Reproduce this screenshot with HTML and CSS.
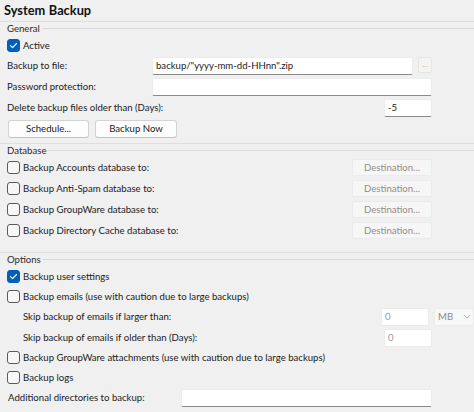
FILE: index.html
```html
<!DOCTYPE html>
<html>
<head>
<meta charset="utf-8">
<link rel="stylesheet" href="styles.css">
</head>
<body>
<div class="page">
  <div class="title">System Backup</div>

  <section class="group group-general">
    <div class="legend"><span>General</span><i></i></div>
    <div class="row">
      <label class="check"><span class="box on"><svg viewBox="0 0 12 12"><path d="M2.8 6.2 L5 8.3 L9.3 3.8" fill="none" stroke="#fff" stroke-width="1.3" stroke-linecap="round" stroke-linejoin="round"/></svg></span>Active</label>
    </div>
    <div class="row form r21">
      <span class="lbl">Backup to file:</span>
      <span class="input file">backup/"yyyy-mm-dd-HHnn".zip</span>
      <span class="browse">...</span>
    </div>
    <div class="row form r21">
      <span class="lbl">Password protection:</span>
      <span class="input wide"></span>
    </div>
    <div class="row form r21">
      <span class="lbl grow">Delete backup files older than (Days):</span>
      <span class="input small">-5</span>
    </div>
    <div class="row buttons r21">
      <span class="btn b1">Schedule...</span>
      <span class="btn b2">Backup Now</span>
    </div>
  </section>

  <section class="group group-db">
    <div class="legend"><span>Database</span><i></i></div>
    <div class="row r21">
      <label class="check grow"><span class="box"></span>Backup Accounts database to:</label>
      <span class="dest">Destination...</span>
    </div>
    <div class="row r21">
      <label class="check grow"><span class="box"></span>Backup Anti-Spam database to:</label>
      <span class="dest">Destination...</span>
    </div>
    <div class="row r21">
      <label class="check grow"><span class="box"></span>Backup GroupWare database to:</label>
      <span class="dest">Destination...</span>
    </div>
    <div class="row r21">
      <label class="check grow"><span class="box"></span>Backup Directory Cache database to:</label>
      <span class="dest">Destination...</span>
    </div>
  </section>

  <section class="group group-opt">
    <div class="legend"><span>Options</span><i></i></div>
    <div class="row">
      <label class="check"><span class="box on"><svg viewBox="0 0 12 12"><path d="M2.8 6.2 L5 8.3 L9.3 3.8" fill="none" stroke="#fff" stroke-width="1.3" stroke-linecap="round" stroke-linejoin="round"/></svg></span>Backup user settings</label>
    </div>
    <div class="row">
      <label class="check"><span class="box"></span>Backup emails (use with caution due to large backups)</label>
    </div>
    <div class="row sub r21">
      <span class="lbl grow">Skip backup of emails if larger than:</span>
      <span class="input small dis">0</span>
      <span class="select">MB<svg viewBox="0 0 10 6"><path d="M1 1 L5 5 L9 1" fill="none" stroke="#a0a0a0" stroke-width="1"/></svg></span>
    </div>
    <div class="row sub r21">
      <span class="lbl grow">Skip backup of emails if older than (Days):</span>
      <span class="input small dis">0</span>
    </div>
    <div class="row r19">
      <label class="check"><span class="box"></span>Backup GroupWare attachments (use with caution due to large backups)</label>
    </div>
    <div class="row">
      <label class="check"><span class="box"></span>Backup logs</label>
    </div>
    <div class="row form r21">
      <span class="lbl add">Additional directories to backup:</span>
      <span class="input addl"></span>
    </div>
  </section>
</div>
</body>
</html>
```

FILE: styles.css
```css
html, body {
  margin: 0;
  padding: 0;
  background: #f0f0f0;
  overflow: hidden;
}
.page {
  width: 474px;
  height: 412px;
  font-family: Lato, "Noto Sans", sans-serif;
  font-size: 9.6px;
  color: #1b1b1b;
}
.title {
  height: 21px;
  line-height: 21px;
  padding-left: 4px;
  font-size: 12.8px;
  font-weight: bold;
  word-spacing: 0.5px;
  color: #111;
}
.group {
  border-top: 1px solid #dedede;
  padding-left: 7px;
}
.legend {
  display: flex;
  align-items: center;
  height: 13px;
  color: #2b2b2b;
}
.legend i {
  flex: 1;
  height: 1px;
  background: #d9d9d9;
  margin-left: 2px;
}
.group-general { padding-bottom: 4px; }
.group-db { padding-bottom: 11px; }

.row {
  display: flex;
  align-items: center;
  height: 20px;
  padding-right: 42px;
}
.r21 { height: 21px; }
.r19 { height: 19px; }
.grow { flex: 1; }
.lbl { white-space: nowrap; }
.form .lbl { width: 145px; }
.form .lbl.grow { width: auto; }
.check {
  display: flex;
  align-items: center;
  white-space: nowrap;
}
.box {
  width: 11px;
  height: 11px;
  border: 1px solid #5a5a5a;
  border-radius: 3px;
  background: #f7f7f7;
  margin-right: 3px;
  display: flex;
}
.box.on {
  border-color: #005fb8;
  background: #005fb8;
}
.box svg { width: 11px; height: 11px; }

.input {
  box-sizing: border-box;
  height: 18px;
  background: #fff;
  border: 1px solid #ececec;
  border-bottom: 1px solid #8a8a8a;
  border-radius: 2px;
  padding-left: 3px;
  line-height: 16px;
  white-space: nowrap;
  overflow: hidden;
}
.input.file { width: 261px; }
.input.wide { width: 280px; }
.input.small { width: 48px; }
.input.dis {
  border-bottom-color: #ececec;
  color: #9a9a9a;
}
.browse {
  box-sizing: border-box;
  width: 14px;
  height: 16px;
  margin-left: 5px;
  margin-top: -2px;
  background: #f4f4f4;
  border: 1px solid #e6e6e6;
  border-radius: 2px;
  color: #b5b5b5;
  font-size: 8px;
  line-height: 12px;
  text-align: center;
}
.buttons { padding-left: 1px; }
.btn {
  box-sizing: border-box;
  height: 18px;
  background: #fdfdfd;
  border: 1px solid #d3d3d3;
  border-bottom-color: #c0c0c0;
  border-radius: 3px;
  text-align: center;
  line-height: 16px;
}
.b1 { width: 81px; }
.b2 { width: 82px; margin-left: 6px; }

.dest {
  box-sizing: border-box;
  width: 80px;
  height: 17px;
  background: #f6f6f6;
  border: 1px solid #ebebeb;
  border-radius: 2px;
  color: #8e8e8e;
  text-align: center;
  line-height: 15px;
}

.sub { padding-left: 16px; padding-right: 0; }
.select {
  box-sizing: border-box;
  display: flex;
  align-items: center;
  width: 40px;
  height: 18px;
  margin-left: 5px;
  background: #f8f8f8;
  border: 1px solid #ececec;
  border-radius: 2px;
  padding-left: 3px;
  color: #8a8a8a;
  flex-shrink: 0;
}
.select svg { width: 8px; height: 5px; margin-left: 10px; }
.sub .input.small:last-child { margin-right: 42px; }
.lbl.add { width: 173px; padding-left: 1px; }
.input.addl { width: 252px; }
```
